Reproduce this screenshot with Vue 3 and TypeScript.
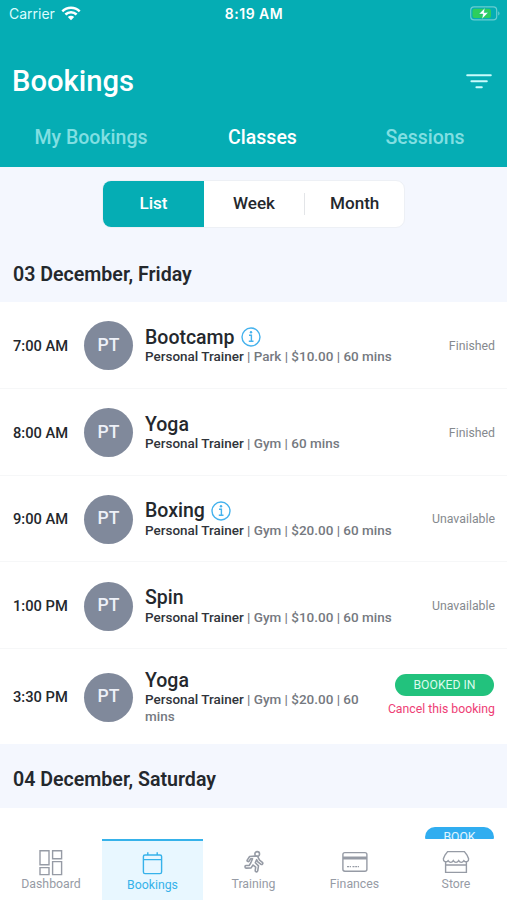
<script setup lang="ts">
interface Booking {
  time: string
  name: string
  info?: boolean
  details: string
  status: string
  booked?: boolean
}

const tabs: string[] = ['My Bookings', 'Classes', 'Sessions']
const views: string[] = ['List', 'Week', 'Month']
const activeTab = 'Classes'
const activeView = 'List'

const friday: Booking[] = [
  { time: '7:00 AM', name: 'Bootcamp', info: true, details: 'Park | $10.00 | 60 mins', status: 'Finished' },
  { time: '8:00 AM', name: 'Yoga', details: 'Gym | 60 mins', status: 'Finished' },
  { time: '9:00 AM', name: 'Boxing', info: true, details: 'Gym | $20.00 | 60 mins', status: 'Unavailable' },
  { time: '1:00 PM', name: 'Spin', details: 'Gym | $10.00 | 60 mins', status: 'Unavailable' },
  { time: '3:30 PM', name: 'Yoga', details: 'Gym | $20.00 | 60 mins', status: 'BOOKED IN', booked: true },
]

const navItems: string[] = ['Dashboard', 'Bookings', 'Training', 'Finances', 'Store']
const activeNav = 'Bookings'
</script>

<template>
  <div class="screen">
    <header class="header">
      <div class="status-bar">
        <div class="carrier">
          <span>Carrier</span>
          <svg width="20" height="15" viewBox="0 0 20 15" fill="none" stroke="#fff" stroke-width="2.5">
            <path d="M1.3 5.3C6.2.4 13.8.4 18.7 5.3" />
            <path d="M4.4 8.5c3.2-3.1 8-3.1 11.2 0" />
            <path d="M10 14.2 6.8 10.9c1.8-1.7 4.6-1.7 6.4 0Z" fill="#fff" stroke="none" />
          </svg>
        </div>
        <span class="clock">8:19 AM</span>
        <svg class="battery" width="30" height="15" viewBox="0 0 30 15">
          <rect x=".7" y=".9" width="26" height="13" rx="3.4" fill="none" stroke="#69cdd1" stroke-width="1.2" />
          <rect x="2.5" y="2.7" width="18.5" height="9.4" rx="2" fill="#2dce5c" />
          <path d="M28.2 5.2c1.8.8 1.8 3.6 0 4.4Z" fill="#69cdd1" />
          <path d="M15 1.8 8.8 8.1h4.1l-1.1 5.1 6.5-6.6h-4.2Z" fill="#fff" stroke="#14b884" stroke-width=".5" />
        </svg>
      </div>
      <div class="title-row">
        <h1>Bookings</h1>
        <svg width="26" height="16" viewBox="0 0 26 16" stroke="#c9fbfc" stroke-width="2" stroke-linecap="round">
          <path d="M1.2 2.3h23.6M5.4 8.3h15.4M10.4 14.2h5.4" />
        </svg>
      </div>
      <nav class="tabs">
        <span v-for="tab in tabs" :key="tab" :class="['tab', { active: tab === activeTab }]">{{ tab }}</span>
      </nav>
    </header>

    <div class="segment-wrap">
      <div class="segment">
        <span v-for="view in views" :key="view" :class="['view', { active: view === activeView }]">{{ view }}</span>
      </div>
    </div>

    <h2 class="date">03 December, Friday</h2>
    <section>
      <article v-for="item in friday" :key="item.time" :class="['row', { tall: item.booked }]">
        <span class="time">{{ item.time }}</span>
        <span class="avatar">PT</span>
        <div class="summary">
          <div class="name">
            <span>{{ item.name }}</span>
            <svg v-if="item.info" width="20" height="20" viewBox="0 0 20 20" fill="none" stroke="#45b2ed">
              <circle cx="10" cy="10" r="9" stroke-width="1.4" />
              <path d="M8 8.3h2.4v5.8M7.8 14.2h4.7" stroke-width="1.4" />
              <circle cx="10" cy="5.3" r="1.2" fill="#45b2ed" stroke="none" />
            </svg>
          </div>
          <p class="details"><b>Personal Trainer</b> | {{ item.details }}</p>
        </div>
        <div v-if="item.booked" class="booked">
          <span class="pill">{{ item.status }}</span>
          <span class="cancel">Cancel this booking</span>
        </div>
        <span v-else class="status">{{ item.status }}</span>
      </article>
    </section>

    <h2 class="date second">04 December, Saturday</h2>
    <section class="next-day">
      <span class="pill book">BOOK</span>
    </section>

    <footer class="bottom-nav">
      <div v-for="label in navItems" :key="label" :class="['nav-item', { active: label === activeNav }]">
        <svg v-if="label === 'Dashboard'" width="26" height="28" viewBox="0 0 26 28">
          <path d="M2 1.7h9v14H2zM14.6 1.7h9v8h-9zM2 18.6h9v7H2zM14.6 12.6h9v13h-9z" />
        </svg>
        <svg v-else-if="label === 'Bookings'" width="26" height="28" viewBox="0 0 26 28">
          <rect x="3.4" y="5" width="18.2" height="18.6" rx="1.6" />
          <path d="M3.4 9.6h18.2M7.8 2.2V5M17.2 2.2V5" />
        </svg>
        <svg v-else-if="label === 'Training'" width="26" height="28" viewBox="0 0 26 28">
          <g transform="translate(3.4 1.4) scale(.87)" stroke-width="1.8" stroke-linejoin="round">
            <circle cx="14.7" cy="4.1" r="2.7" />
            <path d="M12.3 6.6 6 7 3.2 11.2c-.6 1.2 1.2 2.3 2.1 1.2l2-2.7 2.1-.1-2 4.6-1.8 3-3.8.2c-1.7.3-1.4 3 .3 3l5.6-.3 2.2-3.3 3.1 2.3-.6 4.1c0 1.8 2.5 2 2.9.3l.9-5.7-3.7-3.6 1.6-3.6 1 2.2 4 3.2c1.4.8 2.8-1.1 1.6-2.2l-3.3-2.6-2.2-4.4Z" />
          </g>
        </svg>
        <svg v-else-if="label === 'Finances'" width="28" height="28" viewBox="0 0 28 28">
          <rect x="1.9" y="3.6" width="24" height="18.6" rx="2" />
          <path d="M2 9h24" stroke-width="3" />
          <path d="M6 17.6h4M11.5 17.6h6.5" stroke-dasharray="2 .7" />
        </svg>
        <svg v-else width="28" height="28" viewBox="0 0 28 28">
          <path d="M5.6 2.6h16.8L25 6l1.6 3.8c.4 2.6-2.8 4.1-4.7 1.9-1.4 2.2-3.9 2.2-5.2 0-1.4 2.2-4 2.2-5.4 0-1.3 2.2-3.8 2.2-5.2 0-1.9 2.2-5.1.7-4.7-1.9L3 6ZM3.6 12.6v10.8h20.8V12.6M3.6 16h20.8" />
        </svg>
        <span>{{ label }}</span>
      </div>
    </footer>
  </div>
</template>

<style>
body {
  margin: 0;
  overflow: hidden;
}
</style>

<style scoped>
.screen {
  box-sizing: border-box;
  position: relative;
  width: 507px;
  height: 900px;
  overflow: hidden;
  background: #f4f7fe;
  color: #24282d;
  font-family: Roboto, sans-serif;
}

h1,
h2,
p {
  margin: 0;
}

.header {
  height: 167px;
  background: #05adb4;
  color: #fff;
}

.status-bar {
  display: grid;
  grid-template-columns: 1fr auto 1fr;
  align-items: center;
  height: 27px;
  padding: 0 7px 0 9px;
  font-family: Inter, sans-serif;
  font-size: 14px;
}

.carrier {
  display: flex;
  align-items: center;
  gap: 6px;
  color: #dcfcfd;
}

.clock {
  font-weight: 600;
  letter-spacing: 0.5px;
  margin-right: 1px;
}

.battery {
  justify-self: end;
}

.title-row {
  display: flex;
  align-items: center;
  justify-content: space-between;
  height: 81px;
  padding: 27px 15px 0 12px;
  box-sizing: border-box;
}

h1 {
  font-size: 29.2px;
  font-weight: 500;
  line-height: 34px;
}

.tabs {
  display: grid;
  grid-template-columns: 182px 161px 164px;
  height: 58px;
  align-items: center;
  text-align: center;
}

.tab {
  color: #81dfe2;
  font-size: 19.5px;
  font-weight: 500;
}

.tab.active {
  color: #fff;
}

.segment-wrap {
  display: flex;
  justify-content: center;
  padding: 13px 0 19px;
}

.segment {
  box-sizing: border-box;
  display: grid;
  grid-template-columns: 101px 100px 100px;
  width: 303px;
  height: 48px;
  border: 1px solid #edf0f5;
  border-radius: 9px;
  overflow: hidden;
  background: #fff;
}

.view {
  display: flex;
  align-items: center;
  justify-content: center;
  padding-bottom: 3px;
  font-size: 17.1px;
  font-weight: 500;
}

.view.active {
  background: #05adb4;
  color: #fff;
}

.view:last-child::before {
  content: '';
  width: 1px;
  height: 22px;
  margin: 2px 25px 0 0;
  background: #e3e5e8;
}

.view:last-child {
  justify-content: flex-start;
}

.date {
  display: flex;
  align-items: center;
  height: 55px;
  padding-left: 13px;
  font-size: 19.6px;
  font-weight: 600;
}

.date.second {
  height: 64px;
  padding-top: 6px;
  box-sizing: border-box;
}

.row {
  box-sizing: border-box;
  display: flex;
  align-items: center;
  height: 86.75px;
  padding: 2px 12px 0 13px;
  border-bottom: 1px solid #f6f7f8;
  background: #fff;
}

.row.tall {
  height: 95px;
  padding-top: 1px;
  border-bottom: 0;
}

.time {
  width: 71px;
  font-size: 14.7px;
  font-weight: 500;
}

.avatar {
  box-sizing: border-box;
  display: flex;
  align-items: center;
  justify-content: center;
  width: 49px;
  height: 49px;
  margin-right: 12px;
  padding-bottom: 2px;
  border-radius: 50%;
  background: #80899b;
  color: #eef1f8;
  font-size: 17.5px;
  font-weight: 500;
}

.summary {
  flex: 1;
}

.name {
  display: flex;
  align-items: center;
  gap: 6px;
  height: 22px;
  font-size: 19.5px;
  font-weight: 500;
}

.details {
  color: #75797f;
  font-size: 13.48px;
  font-weight: 500;
  line-height: 17px;
}

.details b {
  color: #30343a;
  font-weight: 500;
}

.status {
  color: #85898e;
  font-size: 12.3px;
}

.booked {
  display: flex;
  flex-direction: column;
  align-items: flex-end;
  gap: 6px;
  margin-left: 20px;
  padding-bottom: 3px;
}

.pill {
  display: flex;
  align-items: center;
  justify-content: center;
  width: 99px;
  height: 22px;
  margin-right: 1px;
  border-radius: 11px;
  background: #22c27d;
  color: #dcfbed;
  font-size: 12.2px;
}

.cancel {
  color: #ee3e75;
  font-size: 12.25px;
  line-height: 15px;
}

.next-day {
  display: flex;
  justify-content: flex-end;
  height: 92px;
  padding: 19px 13px 0 0;
  box-sizing: border-box;
  background: #fff;
}

.pill.book {
  width: 69px;
  height: 20px;
  margin: 0;
  background: #30adf0;
  color: #e1f5ff;
}

.bottom-nav {
  position: absolute;
  right: 0;
  bottom: 0;
  left: 0;
  display: grid;
  grid-template-columns: 102px 101px 101px 101px 102px;
  height: 61px;
  background: #fff;
}

.nav-item {
  display: flex;
  flex-direction: column;
  align-items: center;
  box-sizing: border-box;
  padding-top: 10px;
  color: #969ba5;
  font-size: 12.3px;
  line-height: 14px;
}

.nav-item svg {
  fill: none;
  stroke: currentColor;
  stroke-width: 1.4;
}

.nav-item.active {
  border-top: 2.5px solid #36b2ea;
  padding-top: 9px;
  background: #e8f7ff;
  color: #36b2ea;
}
</style>
